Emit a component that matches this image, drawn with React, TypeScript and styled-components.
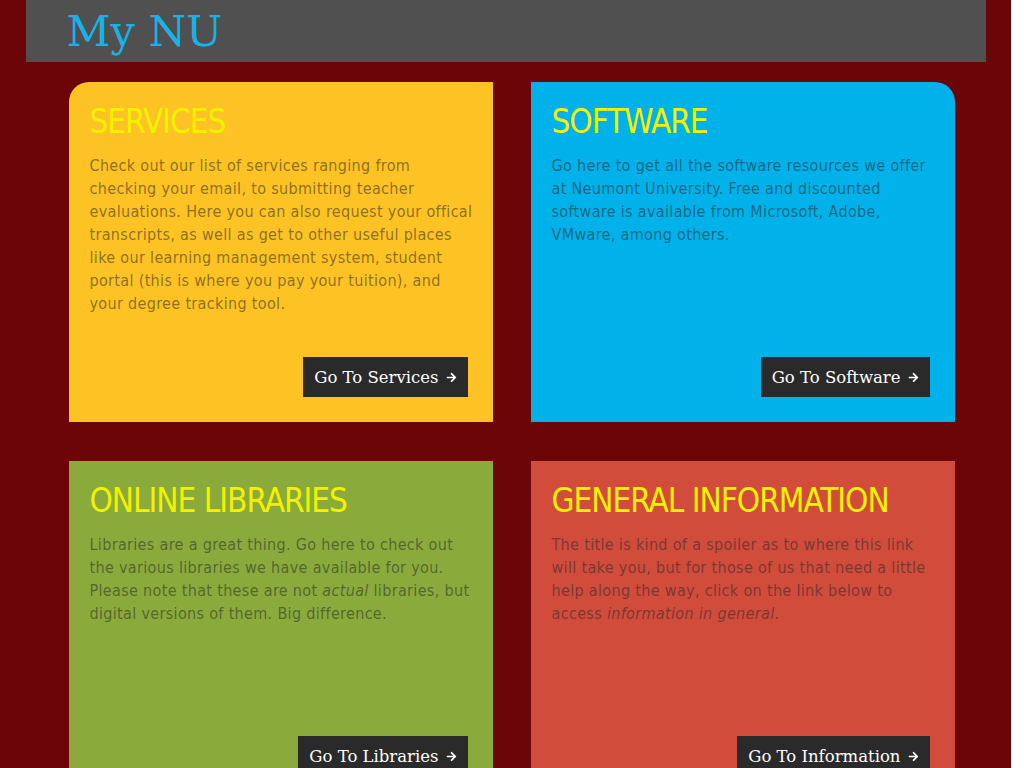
import React from "react";
import styled, { createGlobalStyle } from "styled-components";
import { FaArrowRight } from "react-icons/fa";

const Global = createGlobalStyle`
  html, body { margin: 0; padding: 0; background: #ffffff; }
  #root { width: 1011px; }
`;

const Page = styled.div`
  width: 1011px;
  min-height: 768px;
  background: #6b0508;
  display: flex;
  flex-direction: column;
  align-items: center;
`;

const Header = styled.header`
  width: 960px;
  height: 62px;
  background: #505050;
  box-sizing: border-box;
  padding-left: 41px;
  display: flex;
  align-items: flex-start;
`;

const Logo = styled.h1`
  margin: 0;
  font-family: "DejaVu Serif", serif;
  font-weight: 400;
  font-size: 43px;
  line-height: 62px;
  color: #1ab2e6;
`;

const Grid = styled.main`
  display: grid;
  grid-template-columns: 424px 424px;
  column-gap: 38px;
  row-gap: 39px;
  margin-top: 20px;
  margin-left: 31px;
  margin-right: 19px;
`;

const Card = styled.section<{ $bg: string; $round?: "left" | "right" }>`
  height: 340px;
  background: ${(p) => p.$bg};
  box-sizing: border-box;
  padding: 20px 16px 25px 21px;
  display: flex;
  flex-direction: column;
  border-top-left-radius: ${(p) => (p.$round === "left" ? "20px" : "0")};
  border-top-right-radius: ${(p) => (p.$round === "right" ? "20px" : "0")};
`;

const Title = styled.h2`
  margin: 0;
  font-family: "DejaVu Sans Condensed", "DejaVu Sans", sans-serif;
  font-weight: 400;
  font-size: 33px;
  letter-spacing: -1px;
  line-height: 40px;
  color: #f2f200;
`;

const Body = styled.p`
  margin: 12px 0 0;
  font-family: "DejaVu Sans Condensed", "DejaVu Sans", sans-serif;
  font-size: 16px;
  letter-spacing: 0.33px;
  line-height: 23px;
  color: rgba(40, 40, 40, 0.55);
`;

const Button = styled.a`
  margin-top: auto;
  margin-right: 9px;
  align-self: flex-end;
  display: flex;
  align-items: center;
  gap: 7px;
  height: 40px;
  box-sizing: border-box;
  padding: 0 11px 0 11px;
  background: #2a2a2a;
  color: #ffffff;
  font-family: "DejaVu Serif", serif;
  font-size: 16.5px;
  text-decoration: none;
  svg { width: 11px; height: 11px; }
`;

const cards = [
  {
    title: "SERVICES",
    bg: "#fdc223",
    round: "left" as const,
    button: "Go To Services",
    body: (
      <>
        Check out our list of services ranging from checking your email, to submitting teacher
        evaluations. Here you can also request your offical transcripts, as well as get to other
        useful places like our learning management system, student portal (this is where you pay
        your tuition), and your degree tracking tool.
      </>
    ),
  },
  {
    title: "SOFTWARE",
    bg: "#00b1ea",
    round: "right" as const,
    button: "Go To Software",
    body: (
      <>
        Go here to get all the software resources we offer at Neumont University. Free and
        discounted software is available from Microsoft, Adobe, VMware, among others.
      </>
    ),
  },
  {
    title: "ONLINE LIBRARIES",
    bg: "#8aab3b",
    button: "Go To Libraries",
    body: (
      <>
        Libraries are a great thing. Go here to check out the various libraries we have available
        for you. Please note that these are not <i>actual</i> libraries, but digital versions of
        them. Big difference.
      </>
    ),
  },
  {
    title: "GENERAL INFORMATION",
    bg: "#d24c3c",
    button: "Go To Information",
    body: (
      <>
        The title is kind of a spoiler as to where this link will take you, but for those of us
        that need a little help along the way, click on the link below to access{" "}
        <i>information in general</i>.
      </>
    ),
  },
];

export default function App() {
  return (
    <>
      <Global />
      <Page>
        <Header>
          <Logo>My NU</Logo>
        </Header>
        <Grid>
          {cards.map((c) => (
            <Card key={c.title} $bg={c.bg} $round={c.round}>
              <Title>{c.title}</Title>
              <Body>{c.body}</Body>
              <Button href="#">
                {c.button}
                <FaArrowRight />
              </Button>
            </Card>
          ))}
        </Grid>
      </Page>
    </>
  );
}
